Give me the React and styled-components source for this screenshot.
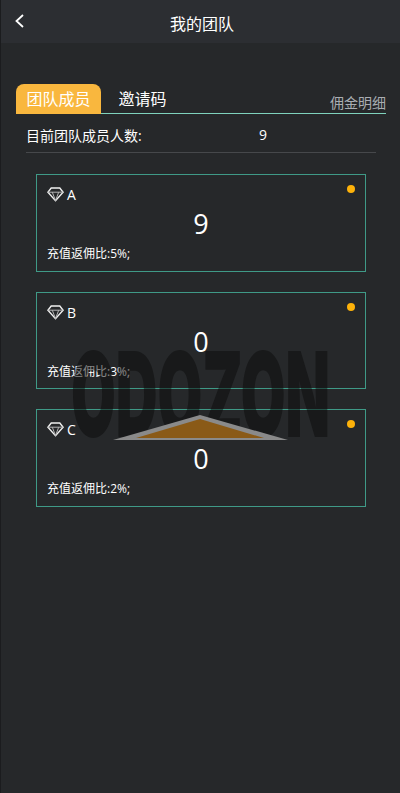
import React from "react";
import styled, { createGlobalStyle } from "styled-components";

const FONT = `"Open Sans", "Noto Sans CJK SC", sans-serif`;

const GlobalStyle = createGlobalStyle`
  html, body {
    margin: 0;
    padding: 0;
    background: #1b1c1e;
  }
  * {
    box-sizing: border-box;
  }
`;

const Page = styled.div`
  position: relative;
  width: 399px;
  min-height: 793px;
  margin-left: 1px;
  background: #26282a;
  color: #fff;
  font-family: ${FONT};
  overflow: hidden;
`;

const Header = styled.div`
  position: relative;
  height: 43px;
  background: #2c2e32;
  display: flex;
  align-items: center;
  justify-content: center;
  font-size: 16px;
  padding: 2px 0 0 3px;
`;

const BackButton = styled.div`
  position: absolute;
  left: 13px;
  top: 14px;
  width: 12px;
  height: 16px;
  display: flex;
`;

const Tabs = styled.div`
  display: flex;
  align-items: flex-end;
  height: 31px;
  margin: 40px 14px 0 15px;
  border-bottom: 1px solid #7fd3bd;
`;

const Tab = styled.div`
  width: ${(props) => (props.active ? 85 : 83)}px;
  height: 30px;
  line-height: 30px;
  margin-bottom: -1px;
  border-radius: 8px 8px 0 0;
  text-align: center;
  font-size: 16px;
  background: ${(props) => (props.active ? "#f9b73e" : "transparent")};
`;

const CommissionLink = styled.div`
  margin-left: auto;
  font-size: 14px;
  line-height: 20px;
  color: #a9adb2;
`;

const CountRow = styled.div`
  display: flex;
  align-items: center;
  height: 39px;
  margin: 0 24px 0 25px;
  padding: 3px 0 0;
  border-bottom: 1px solid #46484b;
  font-size: 14px;
`;

const CountLabel = styled.div`
  width: 233px;
`;

const CardList = styled.div`
  display: flex;
  flex-direction: column;
  gap: 20px;
  margin: 21px 34px 0 35px;
`;

const Card = styled.div`
  position: relative;
  height: ${(props) => props.height}px;
  padding: 9px 10px 0;
  border: 1px solid #3f9a87;
`;

const LevelRow = styled.div`
  display: flex;
  align-items: center;
  gap: 3px;
  height: 20px;
  margin-bottom: 1px;
  font-size: 14px;
`;

const Dot = styled.span`
  position: absolute;
  top: 10px;
  right: 10px;
  width: 8px;
  height: 8px;
  border-radius: 50%;
  background: #fdb20a;
`;

const Count = styled.div`
  text-align: center;
  font-size: 27px;
  line-height: 38px;
`;

const Rate = styled.div`
  font-size: 12px;
  line-height: 16px;
  margin-top: 3px;
`;

const Watermark = styled.div`
  position: absolute;
  left: 70px;
  top: 327px;
  font-family: Inter, "Liberation Sans", sans-serif;
  font-weight: 900;
  font-size: 118px;
  line-height: 134px;
  white-space: nowrap;
  color: rgba(10, 10, 10, 0.5);
  transform: scaleX(0.49);
  transform-origin: left top;
  pointer-events: none;
`;

const Marker = styled.svg`
  position: absolute;
  left: 111px;
  top: 414px;
  pointer-events: none;
`;

const DiamondIcon = () => (
  <svg width="17" height="15" viewBox="0 0 17 15" fill="none" stroke="#f0f0f0" strokeWidth="1.4">
    <path d="M4.2 1h8.6l3.3 4.2-7.6 8.6L.9 5.2z" />
    <path d="M1 5.2h15M5.3 5.2l3.2 8.4 3.2-8.4" strokeWidth="1" stroke="#b5b5b5" />
  </svg>
);

const levels = [
  { name: "A", count: 9, rate: 5, height: 98 },
  { name: "B", count: 0, rate: 3, height: 97 },
  { name: "C", count: 0, rate: 2, height: 98 },
];

const App = () => (
  <Page>
    <GlobalStyle />
    <Header>
      <BackButton>
        <svg width="12" height="16" viewBox="0 0 12 16" fill="none" stroke="#fff" strokeWidth="1.8">
          <path d="M9 1 2.5 7 9 13" />
        </svg>
      </BackButton>
      我的团队
    </Header>
    <Tabs>
      <Tab active>团队成员</Tab>
      <Tab>邀请码</Tab>
      <CommissionLink>佣金明细</CommissionLink>
    </Tabs>
    <CountRow>
      <CountLabel>目前团队成员人数:</CountLabel>
      <span>9</span>
    </CountRow>
    <CardList>
      {levels.map((level) => (
        <Card key={level.name} height={level.height}>
          <LevelRow>
            <DiamondIcon />
            {level.name}
          </LevelRow>
          <Dot />
          <Count>{level.count}</Count>
          <Rate>充值返佣比:{level.rate}%;</Rate>
        </Card>
      ))}
    </CardList>
    <Watermark>ODOZON</Watermark>
    <Marker width="176" height="28" viewBox="0 0 176 28">
      <path d="M1 26 88 1l88 25z" fill="#8a8a8a" />
      <path d="M24 24 88 5l64 19z" fill="#8a5a17" />
    </Marker>
  </Page>
);

export default App;
